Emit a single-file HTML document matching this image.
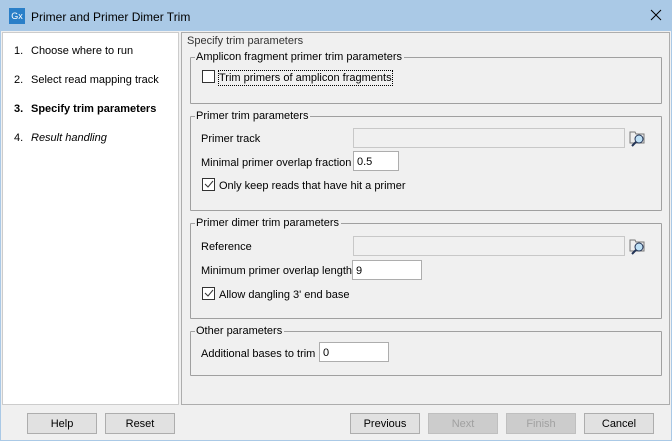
<!DOCTYPE html>
<html><head><style>
*{box-sizing:border-box;margin:0;padding:0}
body{width:672px;height:441px;background:#f0f0f0;font-family:"Liberation Sans",sans-serif;font-size:11px;color:#000;position:relative;overflow:hidden}
.a{position:absolute}
.t{position:absolute;white-space:nowrap;line-height:14px;margin-top:1px}
.g{position:absolute;border:1px solid #a0a0a0;border-radius:1px}
.lg{position:absolute;top:-8px;left:4px;background:#f0f0f0;padding:0 2px 0 1px;line-height:14px}
.f{position:absolute;border:1px solid #adadad;background:#fff;padding:3px 0 0 3px;line-height:14px}
.f.d{background:#f0f0f0;border-color:#c8c8c8}
.cb{position:absolute;width:13px;height:13px;border:1px solid #333;background:#fff}
.b{position:absolute;top:413px;height:21px;width:70px;border:1px solid #adadad;background:#e1e1e1;text-align:center;line-height:20px}
.b.x{color:#a0a0a0;background:#cccccc;border-color:#bfbfbf}
</style></head><body>
<div class="a" style="left:0;top:0;width:672px;height:31px;background:#aac9e6"></div>
<div class="a" style="left:0;top:31px;width:672px;height:410px;border:1px solid #aac9e6;border-top:none"></div>
<div class="a" style="left:9px;top:8px;width:16px;height:16px;background:#2a7fc8;color:#fff;font-size:9px;line-height:16px;text-align:center">Gx</div>
<div class="t" style="left:31px;top:9px;font-size:12px">Primer and Primer Dimer Trim</div>
<svg class="a" style="left:650px;top:9px" width="12" height="12"><path d="M1 1L11 11M11 1L1 11" stroke="#000" stroke-width="1"/></svg>
<div class="a" style="left:2px;top:32px;width:177px;height:373px;background:#fff;border:1px solid #ccc"></div>
<div class="t" style="left:14px;top:43px">1.</div><div class="t" style="left:31px;top:43px">Choose where to run</div>
<div class="t" style="left:14px;top:72px">2.</div><div class="t" style="left:31px;top:72px">Select read mapping track</div>
<div class="t" style="left:14px;top:101px;font-weight:bold">3.</div><div class="t" style="left:31px;top:101px;font-weight:bold">Specify trim parameters</div>
<div class="t" style="left:14px;top:130px">4.</div><div class="t" style="left:31px;top:130px"><i>Result handling</i></div>
<div class="a" style="left:181px;top:32px;width:489px;height:373px;border:1px solid #adadad"></div>
<div class="t" style="left:187px;top:33px;color:#333">Specify trim parameters</div>
<div class="g" style="left:190px;top:57px;width:472px;height:47px"><div class="lg">Amplicon fragment primer trim parameters</div></div>
<div class="cb" style="left:202px;top:70px"></div>
<div class="t" style="left:219px;top:70px;outline:1px dotted #000">Trim primers of amplicon fragments</div>
<div class="g" style="left:190px;top:116px;width:472px;height:95px"><div class="lg">Primer trim parameters</div></div>
<div class="t" style="left:201px;top:131px">Primer track</div>
<div class="f d" style="left:353px;top:128px;width:272px;height:20px"></div>
<svg class="a" style="left:629px;top:129px" width="18" height="18"><path d="M1 3h5l1 2h8v9H1z" fill="#eee" stroke="#777"/><circle cx="10" cy="10" r="4" fill="#bfe0f5" stroke="#235"/><path d="M7 13l-4 4" stroke="#235" stroke-width="2"/></svg>
<div class="t" style="left:201px;top:155px">Minimal primer overlap fraction</div>
<div class="f" style="left:353px;top:151px;width:46px;height:20px">0.5</div>
<div class="cb" style="left:202px;top:178px"></div>
<svg class="a" style="left:203px;top:179px" width="11" height="11"><path d="M2 5l3 3l5-6" stroke="#333" fill="none"/></svg>
<div class="t" style="left:219px;top:178px">Only keep reads that have hit a primer</div>
<div class="g" style="left:190px;top:223px;width:472px;height:96px"><div class="lg">Primer dimer trim parameters</div></div>
<div class="t" style="left:201px;top:239px">Reference</div>
<div class="f d" style="left:353px;top:236px;width:272px;height:20px"></div>
<svg class="a" style="left:629px;top:237px" width="18" height="18"><path d="M1 3h5l1 2h8v9H1z" fill="#eee" stroke="#777"/><circle cx="10" cy="10" r="4" fill="#bfe0f5" stroke="#235"/><path d="M7 13l-4 4" stroke="#235" stroke-width="2"/></svg>
<div class="t" style="left:201px;top:263px">Minimum primer overlap length</div>
<div class="f" style="left:352px;top:260px;width:70px;height:20px">9</div>
<div class="cb" style="left:202px;top:287px"></div>
<svg class="a" style="left:203px;top:288px" width="11" height="11"><path d="M2 5l3 3l5-6" stroke="#333" fill="none"/></svg>
<div class="t" style="left:219px;top:287px">Allow dangling 3' end base</div>
<div class="g" style="left:190px;top:331px;width:472px;height:45px"><div class="lg">Other parameters</div></div>
<div class="t" style="left:201px;top:346px">Additional bases to trim</div>
<div class="f" style="left:319px;top:342px;width:70px;height:20px">0</div>
<div class="b" style="left:27px">Help</div>
<div class="b" style="left:105px">Reset</div>
<div class="b" style="left:350px">Previous</div>
<div class="b x" style="left:428px">Next</div>
<div class="b x" style="left:506px">Finish</div>
<div class="b" style="left:584px">Cancel</div>
</body></html>
